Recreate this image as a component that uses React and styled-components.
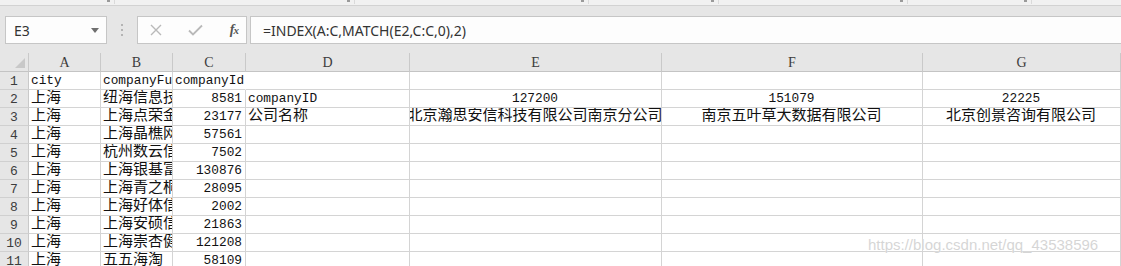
import React from 'react';
import styled, { createGlobalStyle } from 'styled-components';

const GlobalStyle = createGlobalStyle`
  html, body {
    margin: 0;
    padding: 0;
    background: #fff;
    overflow: hidden;
  }
`

const COLS = [29, 72, 72, 73, 164, 252, 261, 198];
const LETTERS = ['A', 'B', 'C', 'D', 'E', 'F', 'G'];

// one entry per row: [A, B, C, D, E, F, G]
const ROWS = [
  [{ t: 'city' }, { t: 'companyFullName' }, { t: 'companyId', spill: true }, {}, {}, {}, {}],
  [{ t: '上海', cjk: true }, { t: '纽海信息技术有限公司', cjk: true }, { t: '8581', align: 'right' }, { t: 'companyID' }, { t: '127200', align: 'center' }, { t: '151079', align: 'center' }, { t: '22225', align: 'center' }],
  [{ t: '上海', cjk: true }, { t: '上海点荣金融信息服务', cjk: true }, { t: '23177', align: 'right' }, { t: '公司名称', cjk: true }, { t: '北京瀚思安信科技有限公司南京分公司', cjk: true, align: 'center' }, { t: '南京五叶草大数据有限公司', cjk: true, align: 'center' }, { t: '北京创景咨询有限公司', cjk: true, align: 'center' }],
  [{ t: '上海', cjk: true }, { t: '上海晶樵网络信息技术', cjk: true }, { t: '57561', align: 'right' }, {}, {}, {}, {}],
  [{ t: '上海', cjk: true }, { t: '杭州数云信息技术有限', cjk: true }, { t: '7502', align: 'right' }, {}, {}, {}, {}],
  [{ t: '上海', cjk: true }, { t: '上海银基富力信息技术', cjk: true }, { t: '130876', align: 'right' }, {}, {}, {}, {}],
  [{ t: '上海', cjk: true }, { t: '上海青之桐投资管理有', cjk: true }, { t: '28095', align: 'right' }, {}, {}, {}, {}],
  [{ t: '上海', cjk: true }, { t: '上海好体信息科技有限', cjk: true }, { t: '2002', align: 'right' }, {}, {}, {}, {}],
  [{ t: '上海', cjk: true }, { t: '上海安硕信息技术股份', cjk: true }, { t: '21863', align: 'right' }, {}, {}, {}, {}],
  [{ t: '上海', cjk: true }, { t: '上海崇杏健康管理咨询', cjk: true }, { t: '121208', align: 'right' }, {}, {}, {}, {}],
  [{ t: '上海', cjk: true }, { t: '五五海淘（上海）科技', cjk: true }, { t: '58109', align: 'right' }, {}, {}, {}, {}],
];

const Window = styled.div`
  position: relative;
  width: 1121px;
  height: 266px;
  overflow: hidden;
  background: #fff;
`

const RibbonEdge = styled.div`
  height: 5px;
  background: #f1f1f1;
  border-bottom: 1px solid #d2d2d2;
  display: flex;
  align-items: flex-start;
`

const RibbonTick = styled.span`
  width: 3px;
  height: 2px;
  background: #9a9a9a;
  margin-left: ${p => p.$at}px;
  &::after {
    content: '';
    display: block;
    width: 1px;
    height: 4px;
    margin-left: 7px;
    background: #dadada;
  }
`

const FormulaBar = styled.div`
  height: 47px;
  box-sizing: border-box;
  background: #e6e6e6;
  display: flex;
  align-items: flex-start;
  padding: 10px 0 0 5px;
`

const Box = styled.div`
  height: 28px;
  box-sizing: border-box;
  background: #fdfdfd;
  border: 1px solid #c6c6c6;
  display: flex;
  align-items: center;
`

const NameBox = styled(Box)`
  width: 102px;
  justify-content: space-between;
  padding: 0 7px 0 8px;
  font-family: "Noto Sans", "Liberation Sans", sans-serif;
  font-size: 14px;
  color: #333;
`

const Grip = styled.div`
  width: 30px;
  height: 28px;
  display: flex;
  flex-direction: column;
  align-items: center;
  justify-content: center;
  gap: 3px;

  span {
    width: 2px;
    height: 2px;
    background: #b4b4b4;
  }
`

const FnBox = styled(Box)`
  width: 110px;
  padding: 0 8px 0 12px;
  justify-content: space-between;
`

const FxLabel = styled.span`
  font-family: "Liberation Serif", serif;
  font-style: italic;
  font-weight: bold;
  font-size: 14px;
  color: #555;
  letter-spacing: -1px;

  small {
    font-size: 11px;
  }
`

const FormulaInput = styled(Box)`
  flex: 1;
  margin-left: 3px;
  border-right: none;
  padding-left: 12px;
  font-family: "Noto Sans", "Liberation Sans", sans-serif;
  font-size: 14px;
  color: #333;
`

const Sheet = styled.div`
  display: grid;
  grid-template-columns: ${COLS.map(w => w + 'px').join(' ')};
  grid-template-rows: 19px;
  grid-auto-rows: 18px;
`

const HeadCell = styled.div`
  box-sizing: border-box;
  background: #e6e6e6;
  border-right: 1px solid #c9c9c9;
  border-bottom: 1px solid #c4c4c4;
  display: flex;
  align-items: center;
  justify-content: center;
  font-family: "Liberation Serif", serif;
  font-size: 14px;
  color: #3c3c3c;
  padding-top: 2px;
`

const Corner = styled(HeadCell)`
  position: relative;

  &::after {
    content: '';
    position: absolute;
    right: 3px;
    bottom: 3px;
    border-style: solid;
    border-width: 0 0 10px 10px;
    border-color: transparent transparent #c8c8c8 transparent;
  }
`

const RowHead = styled(HeadCell)`
  border-bottom-color: #d0d0d0;
  font-family: "Liberation Mono", monospace;
  font-size: 13px;
  padding-top: 1px;
`

const Cell = styled.div`
  box-sizing: border-box;
  position: relative;
  min-width: 0;
  border-right: 1px solid ${p => (p.$spill ? 'transparent' : '#d4d4d4')};
  border-bottom: 1px solid #d4d4d4;
  overflow: ${p => (p.$spill ? 'visible' : 'hidden')};
  z-index: ${p => (p.$spill ? 1 : 0)};
  white-space: nowrap;
  display: flex;
  align-items: center;
  justify-content: ${p => (p.$align === 'right' ? 'flex-end' : p.$align === 'center' ? 'center' : 'flex-start')};
  padding: 0 3px 0 2px;
  font-family: "Liberation Mono", "Noto Sans CJK SC", monospace;
  font-size: ${p => (p.$cjk ? '15px' : '12.8px')};
  line-height: 18px;
  color: #111;

  span {
    flex-shrink: 0;
  }
`

const Watermark = styled.div`
  position: absolute;
  left: 868px;
  top: 236px;
  font-family: "Liberation Sans", sans-serif;
  font-size: 15px;
  color: rgba(200, 200, 200, 0.75);
  text-shadow: 0 0 1px #fff;
  pointer-events: none;
`

const App = () => {
  return (
    <Window>
      <GlobalStyle />
      <RibbonEdge>
        <RibbonTick $at={107} />
        <RibbonTick $at={237} />
        <RibbonTick $at={231} />
        <RibbonTick $at={127} />
        <RibbonTick $at={186} />
        <RibbonTick $at={121} />
      </RibbonEdge>
      <FormulaBar>
        <NameBox>
          <span>E3</span>
          <svg width="8" height="5" viewBox="0 0 8 5"><path d="M0 0h8L4 5z" fill="#6f6f6f" /></svg>
        </NameBox>
        <Grip><span /><span /><span /></Grip>
        <FnBox>
          <svg width="12" height="12" viewBox="0 0 12 12"><path d="M1 1l10 10M11 1L1 11" stroke="#b9b9b9" strokeWidth="1.4" /></svg>
          <svg width="15" height="12" viewBox="0 0 15 12"><path d="M1 6.5l4 4L14 1.5" stroke="#b9b9b9" strokeWidth="1.8" fill="none" /></svg>
          <FxLabel>f<small>x</small></FxLabel>
        </FnBox>
        <FormulaInput>=INDEX(A:C,MATCH(E2,C:C,0),2)</FormulaInput>
      </FormulaBar>
      <Sheet>
        <Corner />
        {LETTERS.map(l => <HeadCell key={l}>{l}</HeadCell>)}
        {ROWS.map((row, i) => (
          <React.Fragment key={i}>
            <RowHead>{i + 1}</RowHead>
            {row.map((c, j) => (
              <Cell key={j} $cjk={c.cjk} $align={c.align} $spill={c.spill}>
                {c.t && <span>{c.t}</span>}
              </Cell>
            ))}
          </React.Fragment>
        ))}
      </Sheet>
      <Watermark>https://blog.csdn.net/qq_43538596</Watermark>
    </Window>
  )
}

export default App;
